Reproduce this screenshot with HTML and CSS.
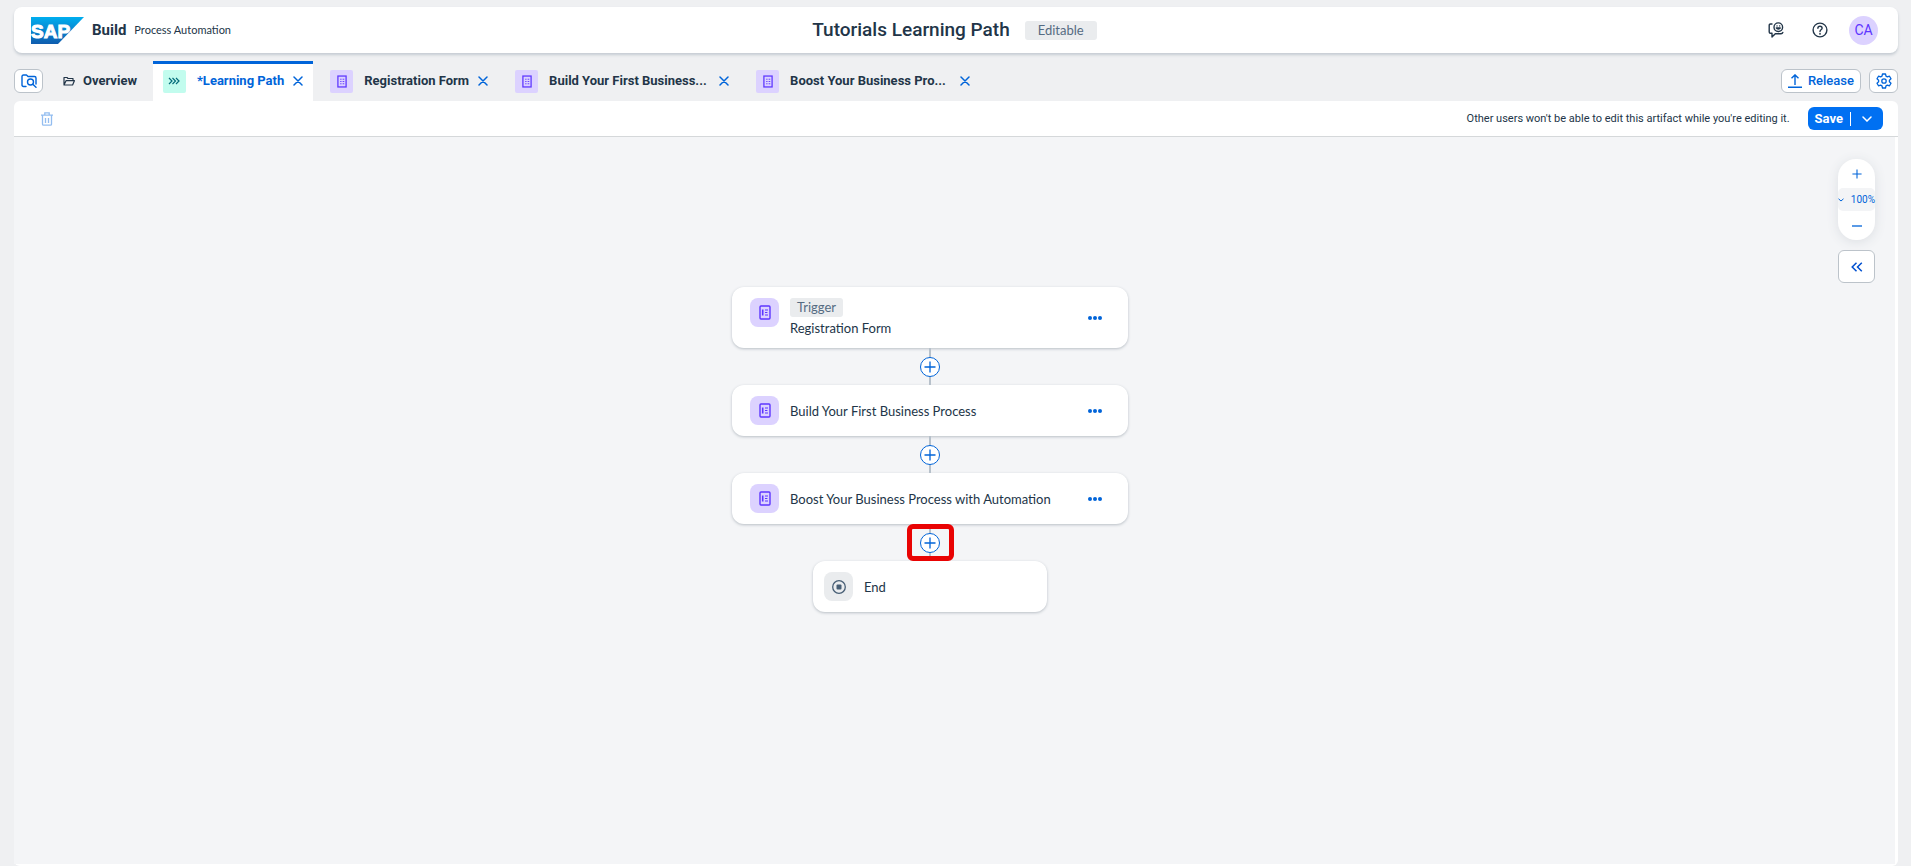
FILE: index.html
```html
<!DOCTYPE html>
<html lang="en">
<head>
<meta charset="utf-8">
<title>Tutorials Learning Path</title>
<link rel="stylesheet" href="styles.css">
</head>
<body>
<svg class="defs" aria-hidden="true">
  <symbol id="form" viewBox="0 0 11 14"><rect x="1" y="1" width="9" height="12" fill="none" stroke="#5d36ff" stroke-width="1.4"/><path d="M3.500 4.500h1.500M3.500 7h1.500M3.500 9.500h1.500M6.200 4.500h1.800M6.200 7h1.800M6.200 9.500h1.800" stroke="#5d36ff" stroke-width="1"/></symbol>
  <symbol id="sheet" viewBox="0 0 12 16"><rect x="1" y="1" width="10" height="13" rx="1" fill="none" stroke="#5d36ff" stroke-width="1.4"/><path d="M3.7 4.5v6" stroke="#5d36ff" stroke-width="1.6"/><path d="M6 5h3M6 7.5h2.4M6 10h3" stroke="#5d36ff" stroke-width="1.2"/></symbol>
  <symbol id="close" viewBox="0 0 10 10"><path d="M1 1l8 8M9 1L1 9" stroke="#0064d9" stroke-width="1.5" stroke-linecap="round"/></symbol>
  <symbol id="dots" viewBox="0 0 16 6"><circle cx="3" cy="3" r="2" fill="#0064d9"/><circle cx="8" cy="3" r="2" fill="#0064d9"/><circle cx="13" cy="3" r="2" fill="#0064d9"/></symbol>
  <symbol id="plus" viewBox="0 0 12 12"><path d="M6 .5v11M.5 6h11" stroke="#0064d9" stroke-width="1.3"/></symbol>
</svg>

<header class="shell">
  <div class="brand">
    <svg class="logo" viewBox="0 0 53 27" role="img" aria-label="SAP">
      <defs><linearGradient id="sap" x1="0" y1="0" x2="0" y2="1"><stop offset="0" stop-color="#00aeef"/><stop offset="1" stop-color="#0f5cae"/></linearGradient></defs>
      <path d="M0 0h53L27 27H0z" fill="url(#sap)"/>
      <text class="logo-text" x="0" y="21">SAP</text>
    </svg>
    <span class="product">Build</span>
    <span class="suite">Process Automation</span>
  </div>
  <div class="heading">
    <h1>Tutorials Learning Path</h1>
    <span class="badge">Editable</span>
  </div>
  <div class="actions">
    <button class="ghost" aria-label="Feedback">
      <svg width="16" height="16" viewBox="0 0 16 16" fill="none" stroke="#223548" stroke-width="1.4" stroke-linecap="round" stroke-linejoin="round"><circle cx="10.300" cy="5.200" r="4.300"/><path d="M8.300 6c.8 1.500 3.200 1.500 4 0zM9 3.900h.1M11.600 3.900h.1M4 2H2.500Q1.200 2 1.200 3.300V10q0 1.300 1.300 1.300H4V15l3.300-3.300H13q1.400 0 1.800-1.200"/></svg>
    </button>
    <button class="ghost" aria-label="Help">
      <svg width="16" height="16" viewBox="0 0 16 16" fill="none" stroke="#223548" stroke-width="1.4" stroke-linecap="round"><circle cx="8" cy="8" r="6.900"/><path d="M5.900 6.300C5.900 3.600 10.100 3.700 10.100 6.200 10.100 7.800 8 7.700 8 9.400"/><circle cx="8" cy="11.700" r=".3"/></svg>
    </button>
    <button class="avatar">CA</button>
  </div>
</header>

<nav class="tabbar">
  <button class="outline square" aria-label="Browse project">
    <svg width="16" height="14" viewBox="0 0 16 14" fill="none" stroke="#0064d9" stroke-width="1.400" stroke-linecap="round" stroke-linejoin="round"><path d="M5 12.500H2.500Q1 12.500 1 11V2.500Q1 1 2.500 1H5.500L7 2.500h6.500Q15 2.500 15 4v6"/><circle cx="9.500" cy="8" r="3"/><path d="M11.800 10.300L15 13.300"/></svg>
  </button>
  <a class="overview" href="#overview">
    <svg width="12" height="10" viewBox="0 0 12 10" fill="none" stroke="#223548" stroke-width="1.200" stroke-linejoin="round"><path d="M1 8.500V1.500h3l1 1h5V4.500M1 9L3 4.700h8.400L9.600 9z"/></svg>
    <span>Overview</span>
  </a>
  <div class="tab active">
    <span class="tile mint"><svg width="12" height="8" viewBox="0 0 12 8" fill="none" stroke="#046c7a" stroke-width="1.200"><path d="M1 1l3 3-3 3M4.500 1l3 3-3 3M8 1l3 3-3 3"/></svg></span>
    <a class="label" href="#path">*Learning Path</a>
    <button class="close" aria-label="Close Learning Path"><svg width="10" height="10"><use href="#close"/></svg></button>
  </div>
  <div class="tab">
    <span class="tile"><svg width="10" height="13"><use href="#form"/></svg></span>
    <a class="label" href="#form-tab">Registration Form</a>
    <button class="close" aria-label="Close Registration Form"><svg width="10" height="10"><use href="#close"/></svg></button>
  </div>
  <div class="tab">
    <span class="tile"><svg width="10" height="13"><use href="#form"/></svg></span>
    <a class="label wide" href="#build-tab">Build Your First Business...</a>
    <button class="close" aria-label="Close Build Your First Business"><svg width="10" height="10"><use href="#close"/></svg></button>
  </div>
  <div class="tab">
    <span class="tile"><svg width="10" height="13"><use href="#form"/></svg></span>
    <a class="label wide" href="#boost-tab">Boost Your Business Pro...</a>
    <button class="close" aria-label="Close Boost Your Business Pro"><svg width="10" height="10"><use href="#close"/></svg></button>
  </div>
  <div class="tab-actions">
    <button class="outline">
      <svg width="14" height="14" viewBox="0 0 14 14" fill="none" stroke="#0064d9" stroke-width="1.400"><path d="M7 11V1M3.500 4.300L7 .9l3.500 3.400M0 13.300h14"/></svg>
      <span>Release</span>
    </button>
    <button class="outline square" aria-label="Settings">
      <svg width="16" height="16" viewBox="0 0 16 16" fill="none" stroke="#0064d9" stroke-width="1.300" stroke-linejoin="round"><path d="M6.500 1h3l.5 2.100 1.400.8 2.100-.7 1.500 2.600L13.400 7.200v1.600l1.600 1.400-1.500 2.600-2.100-.7-1.400.8-.5 2.100h-3L6 12.900l-1.400-.8-2.100.7L1 10.200l1.600-1.400V7.200L1 5.800l1.500-2.600 2.100.7L6 3.100z"/><circle cx="8" cy="8" r="2.200"/></svg>
    </button>
  </div>
</nav>

<main class="panel">
  <div class="toolbar">
    <button class="ghost" aria-label="Delete" disabled>
      <svg width="12" height="14" viewBox="0 0 12 14" fill="none" stroke="#93bdf0" stroke-width="1.300"><path d="M0 3.200h12M3.800 3V.8h4.400V3M1.500 3.500v8.700q0 1 1 1h7q1 0 1-1V3.500M4.500 6v5M7.500 6v5"/></svg>
    </button>
    <p class="notice">Other users won't be able to edit this artifact while you're editing it.</p>
    <div class="save">
      <button class="save-main">Save</button>
      <button class="save-more" aria-label="More save options"><svg width="10" height="6" viewBox="0 0 10 6" fill="none" stroke="#fff" stroke-width="1.500" stroke-linecap="round"><path d="M1 1l4 4 4-4"/></svg></button>
    </div>
  </div>

  <div class="canvas">
    <div class="flow">
      <article class="node">
        <span class="chip"><svg width="12" height="16"><use href="#sheet"/></svg></span>
        <div class="text"><span class="tag">Trigger</span><span>Registration Form</span></div>
        <button class="ghost more" aria-label="More actions"><svg width="16" height="6"><use href="#dots"/></svg></button>
      </article>
      <div class="link"><button class="add" aria-label="Add step"><svg width="12" height="12"><use href="#plus"/></svg></button></div>
      <article class="node">
        <span class="chip"><svg width="12" height="16"><use href="#sheet"/></svg></span>
        <div class="text">Build Your First Business Process</div>
        <button class="ghost more" aria-label="More actions"><svg width="16" height="6"><use href="#dots"/></svg></button>
      </article>
      <div class="link"><button class="add" aria-label="Add step"><svg width="12" height="12"><use href="#plus"/></svg></button></div>
      <article class="node">
        <span class="chip"><svg width="12" height="16"><use href="#sheet"/></svg></span>
        <div class="text">Boost Your Business Process with Automation</div>
        <button class="ghost more" aria-label="More actions"><svg width="16" height="6"><use href="#dots"/></svg></button>
      </article>
      <div class="link marked"><button class="add" aria-label="Add step"><svg width="12" height="12"><use href="#plus"/></svg></button></div>
      <article class="node end">
        <span class="chip grey"><svg width="14" height="14" viewBox="0 0 14 14"><circle cx="7" cy="7" r="6.300" fill="none" stroke="#475e75" stroke-width="1.300"/><rect x="4.500" y="4.500" width="5" height="5" rx="1" fill="#475e75"/></svg></span>
        <div class="text">End</div>
      </article>
    </div>
    <aside class="tools">
      <div class="zoom">
        <button aria-label="Zoom in"><svg width="10" height="10" viewBox="0 0 12 12"><use href="#plus"/></svg></button>
        <button class="level"><svg width="6" height="4" viewBox="0 0 6 4" fill="none" stroke="#0064d9"><path d="M.5 .8L3 3l2.500-2.200"/></svg><span>100%</span></button>
        <button aria-label="Zoom out"><svg width="10" height="2"><path d="M0 1h10" stroke="#0064d9" stroke-width="1.300"/></svg></button>
      </div>
      <button class="outline expand" aria-label="Expand panel"><svg width="12" height="10" viewBox="0 0 12 10" fill="none" stroke="#0050d0" stroke-width="1.500"><path d="M5.500 .7L1.200 5l4.300 4.300M10.800 .7L6.500 5l4.300 4.300"/></svg></button>
    </aside>
  </div>
</main>
</body>
</html>
```
FILE: styles.css
```css
* {
  box-sizing: border-box;
}

body {
  margin: 0;
  min-height: 100vh;
  padding: 7px 13px 0 14px;
  display: flex;
  flex-direction: column;
  background: #eff0f2;
  color: #223548;
  font-family: Roboto, "Noto Sans", sans-serif;
  font-size: 13px;
  line-height: 18px;
}

button {
  padding: 0;
  border: 0;
  background: none;
  font: inherit;
  color: #0064d9;
  display: flex;
  align-items: center;
  justify-content: center;
}

a {
  color: inherit;
  text-decoration: none;
}

svg {
  display: block;
}

.defs {
  position: absolute;
  width: 0;
  height: 0;
}

/* Shell bar */
.shell {
  height: 46px;
  padding: 0 20px 0 17px;
  display: grid;
  grid-template-columns: 1fr auto 1fr;
  align-items: center;
  background: #fff;
  border-radius: 8px;
  box-shadow: 0 2px 3px #c5cbd2;
}

.brand,
.heading,
.actions {
  display: flex;
  align-items: center;
}

.logo {
  width: 53px;
  height: 27px;
}

.logo-text {
  font: bold 19px "Liberation Sans", sans-serif;
  fill: #fff;
  stroke: #fff;
  stroke-width: 1px;
}

.product {
  margin: 0 8px;
  font-size: 15px;
  font-weight: 700;
}

.suite {
  font-family: Lato, Roboto, sans-serif;
  font-size: 11px;
}

.heading {
  gap: 15px;
}

h1 {
  margin: 0;
  font-size: 19px;
  font-weight: 500;
  line-height: 24px;
}

.badge,
.tag {
  background: #eaecee;
  border-radius: 3px;
  color: #556b82;
  font-family: Lato, Roboto, sans-serif;
  line-height: 19px;
}

.badge {
  padding: 0 13px;
}

.actions {
  justify-content: flex-end;
  gap: 28px;
}

.avatar {
  width: 29px;
  height: 29px;
  margin-left: -7px;
  border-radius: 50%;
  background: #dcd2ff;
  color: #5d36ff;
  font-size: 14px;
}

/* Tabs */
.tabbar {
  height: 48px;
  padding-top: 8px;
  display: flex;
  align-items: center;
}

.outline {
  height: 24px;
  padding: 0 6px;
  gap: 6px;
  border: 1px solid #bcc3ca;
  border-radius: 6px;
  background: #fff;
  font-weight: 500;
}

.square {
  width: 29px;
  padding: 0;
}

.overview {
  margin: 0 16px 0 20px;
  display: flex;
  align-items: center;
  gap: 8px;
  font-weight: 700;
}

.tab {
  height: 40px;
  margin-right: 7px;
  padding: 0 10px;
  display: flex;
  align-items: center;
  border-top: 3px solid transparent;
  border-bottom: 3px solid transparent;
  font-weight: 700;
}

.active {
  background: #fff;
  border-top-color: #0064d9;
  border-bottom-color: #fff;
  color: #0064d9;
}

.tile {
  width: 23px;
  height: 23px;
  display: grid;
  place-items: center;
  border-radius: 2px;
  background: #dcd2ff;
}

.mint {
  background: #c2fcee;
}

.label {
  margin: 0 9px 0 11px;
}

.wide {
  min-width: 161px;
}

.tab-actions {
  margin-left: auto;
  display: flex;
  gap: 8px;
}

/* Editor panel */
.panel {
  flex: 1;
  padding: 0 3px 2px 0;
  display: flex;
  flex-direction: column;
  background: #fff;
  border-radius: 6px;
}

.toolbar {
  height: 36px;
  margin-right: -3px;
  padding: 0 15px 0 27px;
  display: flex;
  align-items: center;
  border-bottom: 1px solid #d5d8da;
}

.notice {
  margin: 0 18px 0 auto;
  font-size: 11px;
}

.save {
  height: 23px;
  display: flex;
  align-items: center;
  border-radius: 6px;
  background: #0070f2;
}

.save button {
  color: #fff;
  font-weight: 700;
}

.save-main {
  padding: 0 7px;
}

.save .save-more {
  width: 33px;
  height: 14px;
  border-left: 1px solid #fff;
}

.canvas {
  flex: 1;
  display: flex;
  align-items: flex-start;
  background: #f4f5f7;
}

.flow {
  flex: 1;
  padding: 150px 0 40px 8px;
  display: flex;
  flex-direction: column;
  align-items: center;
}

.node {
  width: 396px;
  min-height: 51px;
  padding: 11px 25px 11px 18px;
  display: flex;
  align-items: center;
  gap: 11px;
  border-radius: 12px;
  background: #fff;
  box-shadow: 0 1px 3px #b8bec5;
}

.end {
  width: 234px;
  padding-left: 11px;
}

.chip {
  width: 29px;
  height: 29px;
  flex: none;
  align-self: flex-start;
  display: grid;
  place-items: center;
  border-radius: 8px;
  background: #dcd2ff;
}

.grey {
  background: #eaecee;
}

.text {
  display: flex;
  flex-direction: column;
  align-items: flex-start;
  gap: 2px;
  font-family: Lato, Roboto, sans-serif;
}

.tag {
  padding: 0 7px;
}

.more {
  margin-left: auto;
}

.link {
  width: 47px;
  height: 37px;
  display: grid;
  place-items: center;
  background: linear-gradient(#b7c1cb, #b7c1cb) center / 2px 100% no-repeat;
}

.add {
  width: 20px;
  height: 20px;
  border: 1px solid #0064d9;
  border-radius: 50%;
  background: #fff;
}

.marked {
  position: relative;
  z-index: 1;
  outline: 5px solid #e90303;
  outline-offset: -5px;
  border-radius: 6px;
}

.tools {
  padding: 22px 20px 0 0;
  display: flex;
  flex-direction: column;
  gap: 10px;
}

.zoom {
  width: 37px;
  border-radius: 18px;
  background: #fff;
  box-shadow: 0 2px 12px #dcdfe3;
}

.zoom button {
  width: 100%;
  height: 29px;
}

.zoom .level {
  height: 23px;
  border-radius: 5px;
  background: #f3f4f6;
  font-size: 10px;
  justify-content: space-between;
}

.expand {
  width: 37px;
  height: 33px;
}
```
